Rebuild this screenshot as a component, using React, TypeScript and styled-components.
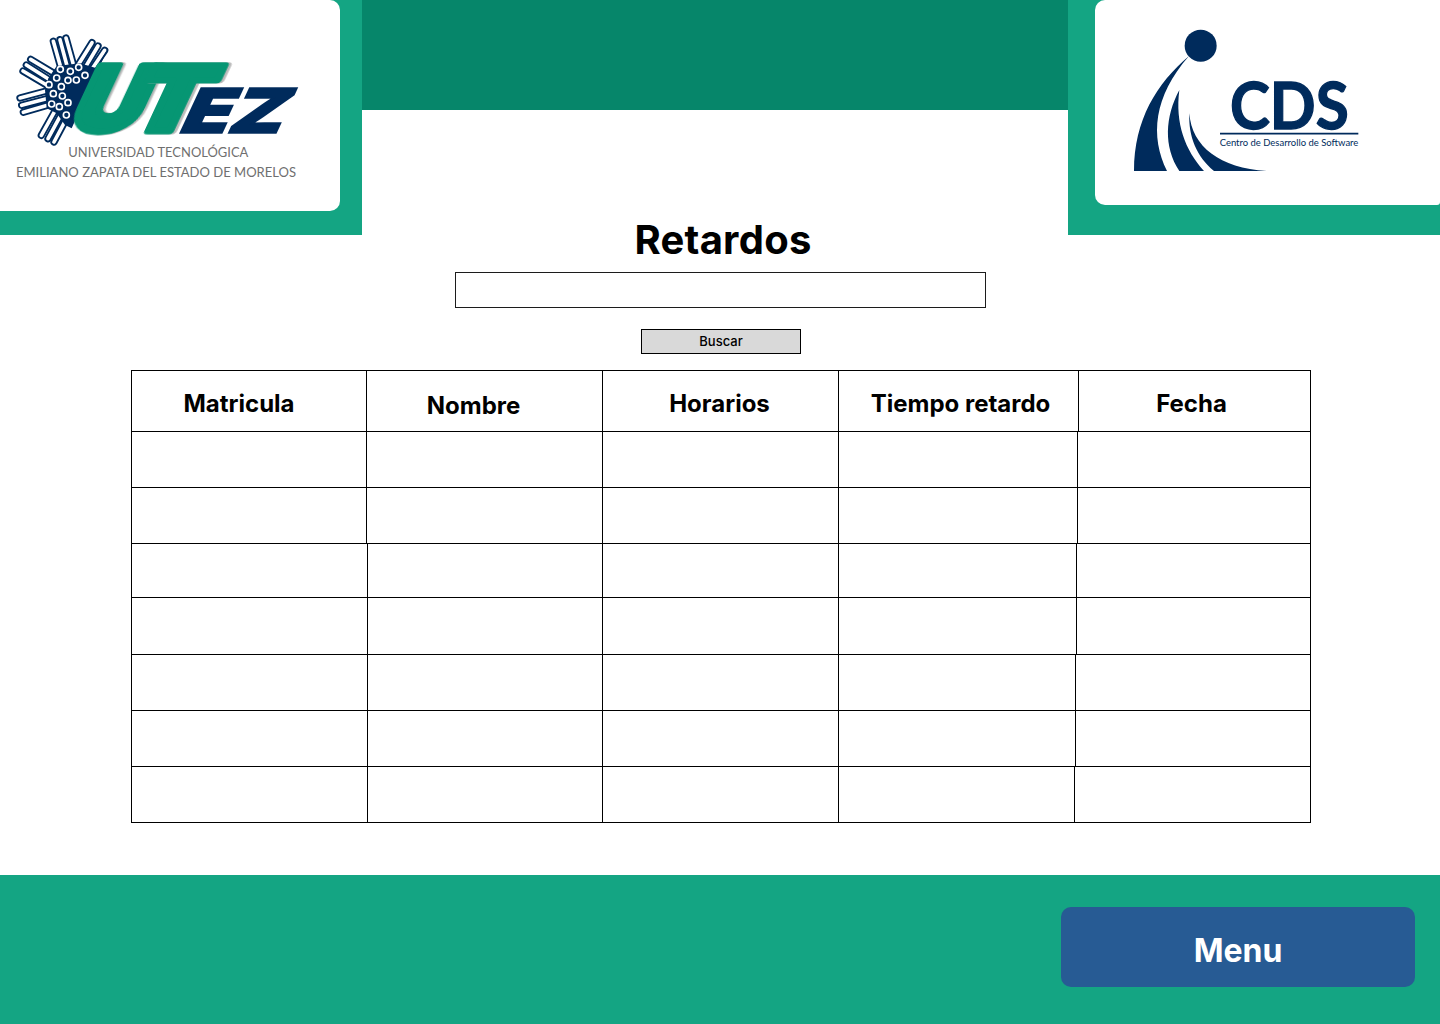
import React from "react";
import styled, { createGlobalStyle } from "styled-components";

const Global = createGlobalStyle`
  html, body { margin: 0; padding: 0; background: #fff; }
  body { font-family: Inter, "Liberation Sans", sans-serif; color: #000; }
`;

const Page = styled.div`
  width: 1440px;
  height: 1024px;
  display: flex;
  flex-direction: column;
  overflow: hidden;
`;
const Top = styled.header`
  display: grid;
  grid-template-columns: 362px 706px 372px;
  align-items: start;
`;
const SidePanel = styled.div<{ $side: "left" | "right" }>`
  height: 235px;
  background: #14a583;
  display: flex;
  justify-content: ${(p) => (p.$side === "left" ? "flex-start" : "flex-end")};
`;
const LogoCard = styled.div<{ $side: "left" | "right" }>`
  background: #fff;
  width: ${(p) => (p.$side === "left" ? "340px" : "345px")};
  height: ${(p) => (p.$side === "left" ? "211px" : "205px")};
  border-radius: ${(p) => (p.$side === "left" ? "0 10px 10px 0" : "10px 0 3px 10px")};
  overflow: hidden;
`;
const LogoSvg = styled.svg`
  display: block;
  width: 100%;
  height: 100%;
`;
const Center = styled.div`
  display: flex;
  flex-direction: column;
  align-items: center;
`;
const Banner = styled.div`
  width: 100%;
  height: 110px;
  background: #06866a;
`;
const Title = styled.h1`
  margin: 106px 0 8px 16px;
  font-size: 40px;
  line-height: 48px;
  font-weight: 700;
  letter-spacing: 0.25px;
`;
const Search = styled.input`
  box-sizing: border-box;
  width: 531px;
  height: 36px;
  margin-left: 10px;
  border: 1px solid #1c1c1c;
  background: #fff;
  padding: 0 8px;
`;
const SearchButton = styled.button`
  box-sizing: border-box;
  width: 160px;
  height: 25px;
  margin: 21px 0 0 12px;
  border: 1px solid #000;
  background: #d9d9d9;
  font-family: Inter, sans-serif;
  font-size: 13px;
  font-weight: 500;
  color: #000;
  padding: 0 0 2px;
`;
const Table = styled.section`
  box-sizing: border-box;
  width: 1180px;
  margin: 16px 0 0 131px;
  border: 1px solid #000;
  border-bottom: 0;
`;
const Row = styled.div<{ $cols: string; $height: number }>`
  display: grid;
  grid-template-columns: ${(p) => p.$cols};
  height: ${(p) => p.$height}px;
  box-sizing: border-box;
  border-bottom: 1px solid #000;
`;
const Cell = styled.div`
  box-sizing: border-box;
  border-right: 1px solid #000;
  &:last-child { border-right: 0; }
`;
const HeadCell = styled(Cell)<{ $shift: number; $drop: number }>`
  display: flex;
  align-items: center;
  justify-content: center;
  font-size: 24px;
  font-weight: 700;
  & > span {
    transform: translate(${(p) => p.$shift}px, ${(p) => p.$drop}px);
  }
`;
const Footer = styled.footer`
  margin-top: 52px;
  height: 149px;
  background: #14a583;
  display: flex;
  justify-content: flex-end;
  padding: 32px 25px 0 0;
  box-sizing: border-box;
`;
const MenuButton = styled.button`
  width: 354px;
  height: 80px;
  border: 0;
  border-radius: 10px;
  background: #275b94;
  color: #fff;
  font-family: Inter, sans-serif;
  font-size: 32px;
  font-weight: 700;
  padding: 6px 0 0;
`;

const widths = (lines: number[]) => {
  let prev = 131;
  const out = lines.map((x) => {
    const w = x - prev;
    prev = x;
    return `${w}px`;
  });
  return [...out, "1fr"].join(" ");
};

const headers = [
  { label: "Matricula", shift: -10, drop: 2 },
  { label: "Nombre", shift: -11, drop: 4 },
  { label: "Horarios", shift: -1, drop: 2 },
  { label: "Tiempo retardo", shift: 2, drop: 2 },
  { label: "Fecha", shift: -3, drop: 2 },
];
const rows = [
  { h: 56, lines: [366, 602, 838, 1077] },
  { h: 56, lines: [366, 602, 838, 1077] },
  { h: 54, lines: [367, 602, 838, 1076] },
  { h: 57, lines: [367, 602, 838, 1076] },
  { h: 56, lines: [367, 602, 838, 1075] },
  { h: 56, lines: [367, 602, 838, 1075] },
  { h: 56, lines: [367, 602, 838, 1074] },
];

const UtezLogo = () => {
  const navy = "#002b5c";
  const fingers: [number, number, number, number][] = [
    [160, 124, 183, 205], [180, 119, 203, 205], [198, 114, 222, 200],
    [276, 128, 225, 210], [294, 138, 245, 220], [314, 151, 262, 228],
    [92, 178, 165, 222], [79, 195, 150, 240], [69, 213, 140, 255],
    [60, 294, 150, 270], [65, 316, 145, 295], [70, 337, 145, 315],
    [124, 406, 172, 320], [144, 416, 188, 335], [162, 426, 205, 345],
  ];
  const dots = [
    [181, 208], [211, 214], [236, 202], [255, 226], [229, 240], [204, 241], [170, 234], [147, 254],
    [184, 260], [160, 281], [187, 288], [204, 308], [155, 312], [178, 320], [199, 345],
  ];
  return (
    <LogoSvg viewBox="0 0 1020 633" role="img" aria-label="UTEZ">
      {fingers.map(([a, b, c, d], i) => (
        <g key={i} fill="none" strokeLinecap="round">
          <line x1={a} y1={b} x2={c} y2={d} stroke={navy} strokeWidth={22} />
          <line x1={a} y1={b} x2={c} y2={d} stroke="#fff" strokeWidth={11} />
        </g>
      ))}
      <polygon
        points="170,198 240,190 290,205 325,142 215,385 195,375 170,340 140,325 135,270 145,235"
        fill={navy}
      />
      {dots.map(([x, y], i) => (
        <circle key={i} cx={x} cy={y} r={9} fill={navy} stroke="#fff" strokeWidth={5} />
      ))}
      <g
        fontFamily="Inter, sans-serif"
        fontWeight={900}
        fontSize={270}
        textAnchor="middle"
        fill="#069673"
        stroke="#069673"
        strokeWidth={20}
        strokeLinejoin="round"
      >
        <text transform="translate(300 393) skewX(-25) scale(1.08 1)" style={{ filter: "drop-shadow(7px 0 0 #b9b9b9)" }}>U</text>
        <text transform="translate(478 393) skewX(-25) scale(1.22 1)" style={{ filter: "drop-shadow(7px 0 0 #b9b9b9)" }}>T</text>
      </g>
      <text
        transform="translate(530 400) skewX(-25) scale(1.28 1)"
        fontFamily="Inter, sans-serif"
        fontWeight={900}
        fontSize={185}
        fill={navy}
        stroke={navy}
        strokeWidth={5}
      >
        EZ
      </text>
      <g fontFamily="Lato, sans-serif" fill="#6f6f6f" fontSize={41}>
        <text x={205} y={472} textLength={540} lengthAdjust="spacingAndGlyphs">UNIVERSIDAD TECNOLÓGICA</text>
        <text x={48} y={530} textLength={840} lengthAdjust="spacingAndGlyphs">EMILIANO ZAPATA DEL ESTADO DE MORELOS</text>
      </g>
    </LogoSvg>
  );
};

const CdsLogo = () => {
  const navy = "#002b5c";
  return (
    <LogoSvg viewBox="105 0 1035 615" role="img" aria-label="CDS">
      <circle cx={422} cy={137} r={48} fill={navy} />
      <path d="M387 168 C290 250 222 360 222 513 L321 513 C270 410 280 290 387 168 Z" fill={navy} />
      <path d="M358 270 C315 350 310 440 358 513 L432 513 C375 450 345 370 358 270 Z" fill={navy} />
      <path d="M388 340 C395 440 480 505 620 513 L462 513 C410 470 385 410 388 340 Z" fill={navy} />
      <text
        x={510}
        y={387}
        fontFamily="Lato, sans-serif"
        fontWeight={700}
        fontSize={195}
        fill={navy}
        stroke={navy}
        strokeWidth={4}
        textLength={356}
        lengthAdjust="spacingAndGlyphs"
      >
        CDS
      </text>
      <line x1={480} y1={401} x2={895} y2={401} stroke={navy} strokeWidth={5} />
      <text x={479} y={437} fontFamily="Lato, sans-serif" fontSize={31} fill={navy} textLength={416} lengthAdjust="spacingAndGlyphs">Centro de Desarrollo de Software</text>
    </LogoSvg>
  );
};

export default function App() {
  return (
    <Page>
      <Global />
      <Top>
        <SidePanel $side="left">
          <LogoCard $side="left"><UtezLogo /></LogoCard>
        </SidePanel>
        <Center>
          <Banner />
          <Title>Retardos</Title>
          <Search aria-label="Buscar" />
          <SearchButton>Buscar</SearchButton>
        </Center>
        <SidePanel $side="right">
          <LogoCard $side="right"><CdsLogo /></LogoCard>
        </SidePanel>
      </Top>
      <Table>
        <Row $cols={widths([366, 602, 838, 1078])} $height={61}>
          {headers.map((h) => (
            <HeadCell key={h.label} $shift={h.shift} $drop={h.drop}><span>{h.label}</span></HeadCell>
          ))}
        </Row>
        {rows.map((r, i) => (
          <Row key={i} $cols={widths(r.lines)} $height={r.h}>
            {[0, 1, 2, 3, 4].map((c) => <Cell key={c} />)}
          </Row>
        ))}
      </Table>
      <Footer>
        <MenuButton>Menu</MenuButton>
      </Footer>
    </Page>
  );
}
